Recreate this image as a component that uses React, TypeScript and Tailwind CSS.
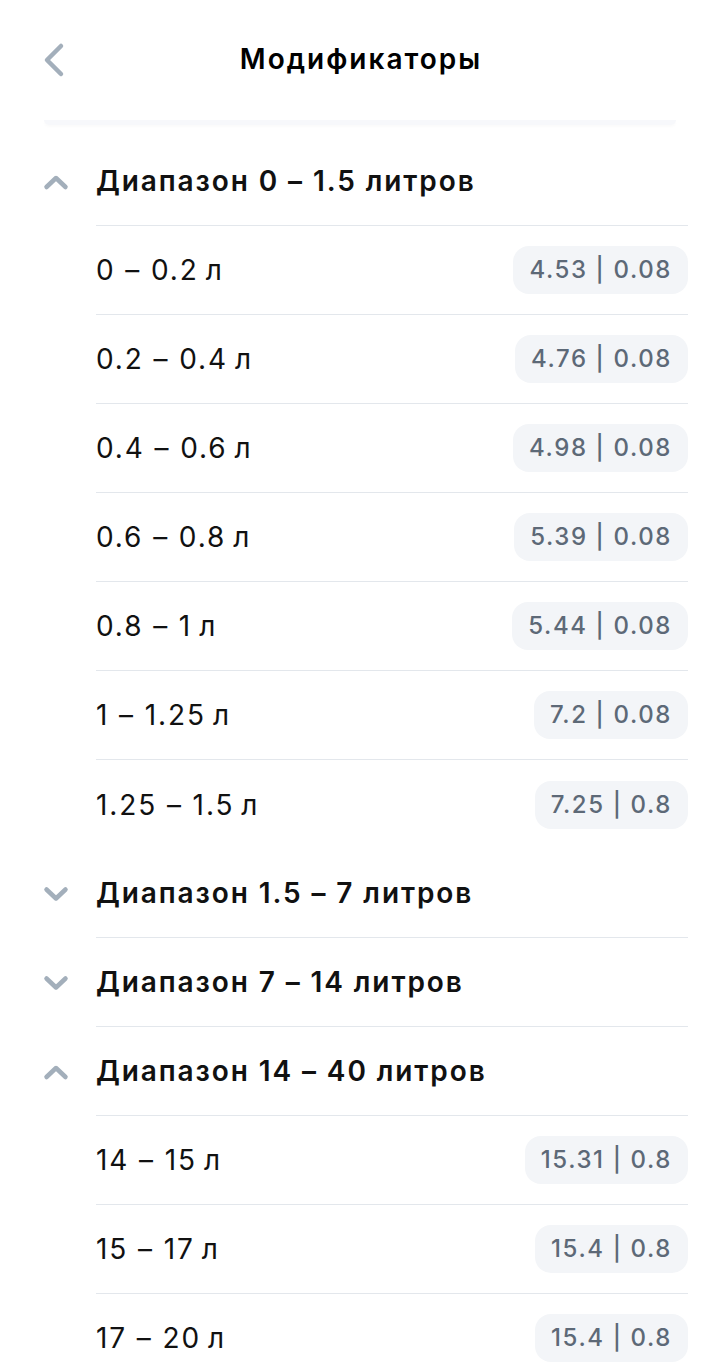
import React from 'react';

type Item = { label: string; price: string };
type Group = { title: string; open: boolean; items: Item[] };

const groups: Group[] = [
  {
    title: 'Диапазон 0 – 1.5 литров',
    open: true,
    items: [
      { label: '0 – 0.2\u2009л', price: '4.53 | 0.08' },
      { label: '0.2 – 0.4\u2009л', price: '4.76 | 0.08' },
      { label: '0.4 – 0.6\u2009л', price: '4.98 | 0.08' },
      { label: '0.6 – 0.8\u2009л', price: '5.39 | 0.08' },
      { label: '0.8 – 1\u2009л', price: '5.44 | 0.08' },
      { label: '1 – 1.25\u2009л', price: '7.2 | 0.08' },
      { label: '1.25 – 1.5\u2009л', price: '7.25 | 0.8' },
    ],
  },
  { title: 'Диапазон 1.5 – 7 литров', open: false, items: [] },
  { title: 'Диапазон 7 – 14 литров', open: false, items: [] },
  {
    title: 'Диапазон 14 – 40 литров',
    open: true,
    items: [
      { label: '14 – 15\u2009л', price: '15.31 | 0.8' },
      { label: '15 – 17\u2009л', price: '15.4 | 0.8' },
      { label: '17 – 20\u2009л', price: '15.4 | 0.8' },
    ],
  },
];

const Chevron = ({ up }: { up: boolean }) => (
  <svg width="26" height="18" viewBox="0 0 26 18" fill="none">
    <path
      d={up ? 'M3.5 14L13 5l9.5 9' : 'M3.5 4.5L13 13.5l9.5-9'}
      stroke="#a3afbb"
      strokeWidth="4.5"
      strokeLinecap="round"
      strokeLinejoin="round"
    />
  </svg>
);

const Row = ({ children, last }: { children: React.ReactNode; last?: boolean }) => (
  <div className={`flex h-[89px] items-center ${last ? '' : 'border-b border-[#e3e7ec]'}`}>{children}</div>
);

export default function App() {
  return (
    <div className="min-h-[1362px] w-[720px] overflow-hidden bg-white text-[#111111]" style={{ fontFamily: 'Inter, "Noto Sans", sans-serif' }}>
      <div className="relative flex h-[120px] items-center justify-center">
        <button className="absolute left-[40px] top-[42px]">
          <svg width="28" height="36" viewBox="0 0 28 36" fill="none">
            <path d="M21 4L7 18l14 14" stroke="#a3afbb" strokeWidth="4.5" strokeLinecap="round" strokeLinejoin="round" />
          </svg>
        </button>
        <h1 className="-mt-[2px] pl-[2px] text-[28px] font-semibold tracking-[2px] text-black">Модификаторы</h1>
      </div>
      <div className="mx-[44px] h-[5px] rounded-b-full bg-[#f7f8fb] shadow-[0_2px_3px_rgba(0,0,0,0.02)]" />

      <div className="pr-[32px] pt-[12px]">
        {groups.map((g, gi) => (
          <div key={gi}>
            <div className="flex">
              <div className="flex h-[89px] w-[96px] items-center justify-start pl-[43px] pt-[1px]">
                <Chevron up={g.open} />
              </div>
              <div className="flex-1">
                <Row>
                  <span className="text-[28px] font-semibold tracking-[1.9px]">{g.title}</span>
                </Row>
              </div>
            </div>
            {g.items.map((it, ii) => (
              <div key={ii} className="ml-[96px]">
                <Row last={gi === 0 && ii === g.items.length - 1}>
                  <span className="flex-1 text-[28px] font-normal tracking-[1.9px]">{it.label}</span>
                  <span className="rounded-[16px] bg-[#f3f5f8] px-[16px] py-[8px] text-[24px] font-medium leading-[32px] tracking-[1.6px] text-[#5d6977]">
                    {it.price}
                  </span>
                </Row>
              </div>
            ))}
          </div>
        ))}
      </div>
    </div>
  );
}
